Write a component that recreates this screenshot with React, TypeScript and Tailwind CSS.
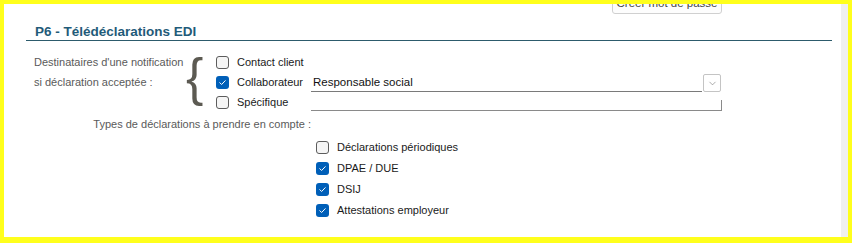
import { ChevronDown } from 'lucide-react';

const font = { fontFamily: '"Liberation Sans", Arial, sans-serif' };

function Box({ checked }: { checked?: boolean }) {
  if (checked) {
    return (
      <span className="flex h-[13px] w-[13px] shrink-0 items-center justify-center rounded-[3px] bg-[#005fb8]">
        <svg width="9" height="9" viewBox="0 0 9 9" fill="none">
          <path d="M1.8 4.7l1.8 1.8 3.6-3.8" stroke="#fff" strokeWidth="1" strokeLinecap="round" strokeLinejoin="round" />
        </svg>
      </span>
    );
  }
  return <span className="h-[13px] w-[13px] shrink-0 rounded-[3px] border border-[#5c5c5c] bg-[#f5f5f5]" />;
}

function Check({ label, checked }: { label: string; checked?: boolean }) {
  return (
    <div className="flex h-[20px] items-center gap-[8px] whitespace-nowrap text-[11px] text-[#1a1a1a]">
      <Box checked={checked} />
      <span>{label}</span>
    </div>
  );
}

export default function App() {
  return (
    <div className="flex h-[243px] w-[852px] bg-[#ffff1c] pl-[4px] pr-[4px] pt-[4px] pb-[6px]" style={font}>
      <div className="flex flex-1 flex-col overflow-hidden bg-white">
        {/* bouton tronqué en haut */}
        <div className="flex h-[10px] pl-[608px]">
          <button className="mt-[-11px] h-[21px] w-[110px] shrink-0 rounded-[3px] border border-[#d0d0d0] bg-[#fdfdfd] text-[11.5px] leading-[15px] text-[#444]">
            Créer mot de passe
          </button>
        </div>

        <div className="ml-[22px] mt-[10px] w-[806px] border-b border-[#2d5b6c] pl-[9px]">
          <h2 className="text-[13.5px] font-bold leading-[16px] text-[#1f5b79]">P6 - Télédéclarations EDI</h2>
        </div>

        <div className="mt-[11px] flex">
          <div className="w-[182px] whitespace-nowrap pl-[30px] text-[11px] leading-[20px] text-[#5a5a5a]">
            <div>Destinataires d'une notification</div>
            <div>si déclaration acceptée :</div>
          </div>
          <div className="mt-[-4px] flex h-[60px] w-[30px] items-start justify-start">
            <span className="text-[52px] font-light leading-[58px] text-[#5c5a52]">{'{'}</span>
          </div>
          <div className="flex flex-col">
            <div className="flex items-center">
              <div className="w-[95px]">
                <Check label="Contact client" />
              </div>
            </div>
            <div className="flex items-center">
              <div className="w-[95px]">
                <Check label="Collaborateur" checked />
              </div>
              <div className="mt-[2px] flex h-[18px] w-[410px] items-stretch">
                <div className="flex flex-1 items-center border-b border-[#7a7a7a] pl-[2px] text-[11.5px] text-[#111]">
                  Responsable social
                </div>
                <div className="ml-[1px] flex w-[18px] items-center justify-center rounded-[2px] border border-[#c4c4c4] bg-white">
                  <ChevronDown size={11} strokeWidth={1.2} className="text-[#666]" />
                </div>
              </div>
            </div>
            <div className="flex items-center">
              <div className="w-[95px]">
                <Check label="Spécifique" />
              </div>
              <div className="mb-[1px] h-[11px] w-[411px] self-end border-b border-r border-[#8a8a8a]" />
            </div>
          </div>
        </div>

        <div className="mt-[2px] flex h-[20px] w-[307px] items-center justify-end whitespace-nowrap text-[11px] text-[#5a5a5a]">
          Types de déclarations à prendre en compte :
        </div>

        <div className="mt-[3px] flex flex-col gap-[1px] pl-[312px]">
          <Check label="Déclarations périodiques" />
          <Check label="DPAE / DUE" checked />
          <Check label="DSIJ" checked />
          <Check label="Attestations employeur" checked />
        </div>
      </div>
      <div className="w-[7px] bg-[#f0f0f0]" />
    </div>
  );
}
